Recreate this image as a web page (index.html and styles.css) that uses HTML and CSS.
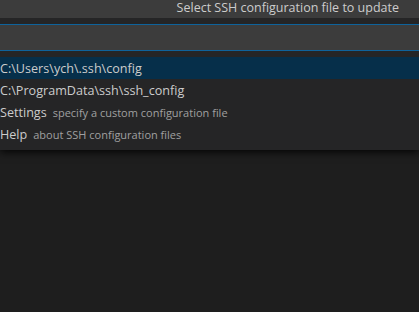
FILE: index.html
```html
<!DOCTYPE html>
<html>
<head>
<meta charset="utf-8">
<link rel="stylesheet" href="styles.css">
</head>
<body>
<div class="panel">
  <div class="title">Select SSH configuration file to update</div>
  <div class="input-wrap">
    <div class="input"></div>
  </div>
  <div class="list">
    <div class="row selected"><span class="label">C:\Users\ych\.ssh\config</span></div>
    <div class="row"><span class="label">C:\ProgramData\ssh\ssh_config</span></div>
    <div class="row"><span class="label">Settings</span><span class="desc">specify a custom configuration file</span></div>
    <div class="row"><span class="label">Help</span><span class="desc">about SSH configuration files</span></div>
  </div>
</div>
</body>
</html>
```
FILE: styles.css
```css
html, body {
  margin: 0;
  padding: 0;
  background: #1e1e1e;
  height: 100%;
  overflow: hidden;
}
body {
  font-family: "Open Sans", "Noto Sans", sans-serif;
  font-size: 13px;
  color: #cccccc;
}
.panel {
  background: #252526;
  box-shadow: 0 2px 8px rgba(0, 0, 0, 0.9);
  padding-bottom: 5px;
}
.title {
  height: 18px;
  background: #3c3c3c;
  text-align: right;
  padding-right: 20px;
  line-height: 16px;
  font-size: 12.5px;
  color: #cccccc;
}
.input-wrap {
  padding: 6px 0 6px 0;
}
.input {
  height: 25px;
  background: #3c3c3c;
  border-top: 1px solid #0e639c;
  border-bottom: 1px solid #0e639c;
}
.list {
  display: flex;
  flex-direction: column;
}
.row {
  height: 22px;
  display: flex;
  align-items: center;
  gap: 6px;
  white-space: nowrap;
}
.row.selected {
  background: #062f4a;
}
.label {
  color: #cccccc;
  font-size: 12.6px;
}
.desc {
  font-size: 11px;
  color: #a0a0a0;
}
```
